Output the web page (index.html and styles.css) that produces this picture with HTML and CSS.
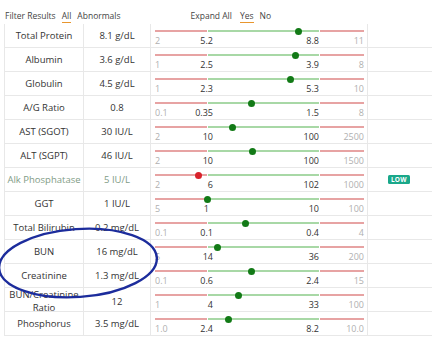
FILE: index.html
```html
<!DOCTYPE html>
<html>
<head>
<meta charset="utf-8">
<link rel="stylesheet" href="styles.css">
</head>
<body>
<div class="page">
  <div class="toolbar">
    <div class="group">
      <span class="lbl">Filter Results</span>
      <span class="opt active">All</span>
      <span class="opt">Abnormals</span>
    </div>
    <div class="group group-right">
      <span class="lbl">Expand All</span>
      <span class="opt active">Yes</span>
      <span class="opt">No</span>
    </div>
  </div>
  <div class="table">
    <div class="row">
      <div class="cell name">Total Protein</div>
      <div class="cell val">8.1 g/dL</div>
      <div class="cell range">
        <div class="bar"><span class="seg red s1"></span><span class="seg green s2"></span><span class="seg red s3"></span><span class="dot" style="left:139.5px"></span></div>
        <div class="labels"><span class="l1"><i>2</i><b>5.2</b></span><span class="l2"><b>8.8</b></span><span class="l3"><i>11</i></span></div>
      </div>
      <div class="cell flag"></div>
    </div>
    <div class="row">
      <div class="cell name">Albumin</div>
      <div class="cell val">3.6 g/dL</div>
      <div class="cell range">
        <div class="bar"><span class="seg red s1"></span><span class="seg green s2"></span><span class="seg red s3"></span><span class="dot" style="left:136.5px"></span></div>
        <div class="labels"><span class="l1"><i>1</i><b>2.5</b></span><span class="l2"><b>3.9</b></span><span class="l3"><i>8</i></span></div>
      </div>
      <div class="cell flag"></div>
    </div>
    <div class="row">
      <div class="cell name">Globulin</div>
      <div class="cell val">4.5 g/dL</div>
      <div class="cell range">
        <div class="bar"><span class="seg red s1"></span><span class="seg green s2"></span><span class="seg red s3"></span><span class="dot" style="left:131.5px"></span></div>
        <div class="labels"><span class="l1"><i>1</i><b>2.3</b></span><span class="l2"><b>5.3</b></span><span class="l3"><i>10</i></span></div>
      </div>
      <div class="cell flag"></div>
    </div>
    <div class="row">
      <div class="cell name">A/G Ratio</div>
      <div class="cell val">0.8</div>
      <div class="cell range">
        <div class="bar"><span class="seg red s1"></span><span class="seg green s2"></span><span class="seg red s3"></span><span class="dot" style="left:92.5px"></span></div>
        <div class="labels"><span class="l1"><i>0.1</i><b>0.35</b></span><span class="l2"><b>1.5</b></span><span class="l3"><i>8</i></span></div>
      </div>
      <div class="cell flag"></div>
    </div>
    <div class="row">
      <div class="cell name">AST (SGOT)</div>
      <div class="cell val">30 IU/L</div>
      <div class="cell range">
        <div class="bar"><span class="seg red s1"></span><span class="seg green s2"></span><span class="seg red s3"></span><span class="dot" style="left:73.5px"></span></div>
        <div class="labels"><span class="l1"><i>2</i><b>10</b></span><span class="l2"><b>100</b></span><span class="l3"><i>2500</i></span></div>
      </div>
      <div class="cell flag"></div>
    </div>
    <div class="row">
      <div class="cell name">ALT (SGPT)</div>
      <div class="cell val">46 IU/L</div>
      <div class="cell range">
        <div class="bar"><span class="seg red s1"></span><span class="seg green s2"></span><span class="seg red s3"></span><span class="dot" style="left:93.5px"></span></div>
        <div class="labels"><span class="l1"><i>2</i><b>10</b></span><span class="l2"><b>100</b></span><span class="l3"><i>1500</i></span></div>
      </div>
      <div class="cell flag"></div>
    </div>
    <div class="row abnormal">
      <div class="cell name">Alk Phosphatase</div>
      <div class="cell val">5 IU/L</div>
      <div class="cell range">
        <div class="bar"><span class="seg red s1"></span><span class="seg green s2"></span><span class="seg red s3"></span><span class="dot dot-red" style="left:39.5px"></span></div>
        <div class="labels"><span class="l1"><i>2</i><b>6</b></span><span class="l2"><b>102</b></span><span class="l3"><i>1000</i></span></div>
      </div>
      <div class="cell flag"><span class="badge">LOW</span></div>
    </div>
    <div class="row">
      <div class="cell name">GGT</div>
      <div class="cell val">1 IU/L</div>
      <div class="cell range">
        <div class="bar"><span class="seg red s1"></span><span class="seg green s2"></span><span class="seg red s3"></span><span class="dot" style="left:48.5px"></span></div>
        <div class="labels"><span class="l1"><i>5</i><b class="near">1</b></span><span class="l2"><b>10</b></span><span class="l3"><i>100</i></span></div>
      </div>
      <div class="cell flag"></div>
    </div>
    <div class="row">
      <div class="cell name">Total Bilirubin</div>
      <div class="cell val">0.2 mg/dL</div>
      <div class="cell range">
        <div class="bar"><span class="seg red s1"></span><span class="seg green s2"></span><span class="seg red s3"></span><span class="dot" style="left:86.5px"></span></div>
        <div class="labels"><span class="l1"><i>0.1</i><b>0.1</b></span><span class="l2"><b>0.4</b></span><span class="l3"><i>4</i></span></div>
      </div>
      <div class="cell flag"></div>
    </div>
    <div class="row">
      <div class="cell name">BUN</div>
      <div class="cell val">16 mg/dL</div>
      <div class="cell range">
        <div class="bar"><span class="seg red s1"></span><span class="seg green s2"></span><span class="seg red s3"></span><span class="dot" style="left:58.5px"></span></div>
        <div class="labels"><span class="l1"><i>5</i><b>14</b></span><span class="l2"><b>36</b></span><span class="l3"><i>200</i></span></div>
      </div>
      <div class="cell flag"></div>
    </div>
    <div class="row">
      <div class="cell name">Creatinine</div>
      <div class="cell val">1.3 mg/dL</div>
      <div class="cell range">
        <div class="bar"><span class="seg red s1"></span><span class="seg green s2"></span><span class="seg red s3"></span><span class="dot" style="left:92.5px"></span></div>
        <div class="labels"><span class="l1"><i>0.1</i><b>0.6</b></span><span class="l2"><b>2.4</b></span><span class="l3"><i>15</i></span></div>
      </div>
      <div class="cell flag"></div>
    </div>
    <div class="row">
      <div class="cell name two">BUN/Creatinine<br>Ratio</div>
      <div class="cell val">12</div>
      <div class="cell range">
        <div class="bar"><span class="seg red s1"></span><span class="seg green s2"></span><span class="seg red s3"></span><span class="dot" style="left:79.5px"></span></div>
        <div class="labels"><span class="l1"><i>1</i><b>4</b></span><span class="l2"><b>33</b></span><span class="l3"><i>100</i></span></div>
      </div>
      <div class="cell flag"></div>
    </div>
    <div class="row">
      <div class="cell name">Phosphorus</div>
      <div class="cell val">3.5 mg/dL</div>
      <div class="cell range">
        <div class="bar"><span class="seg red s1"></span><span class="seg green s2"></span><span class="seg red s3"></span><span class="dot" style="left:69.5px"></span></div>
        <div class="labels"><span class="l1"><i>1.0</i><b>2.4</b></span><span class="l2"><b>8.2</b></span><span class="l3"><i>10.0</i></span></div>
      </div>
      <div class="cell flag"></div>
    </div>
  </div>
  <svg class="annotation" width="432" height="339" viewBox="0 0 432 339">
    <ellipse cx="78" cy="263" rx="79" ry="34" transform="rotate(-4 78 263)" fill="none" stroke="#1c2c9c" stroke-width="2.4"/>
  </svg>
</div>
</body>
</html>
```

FILE: styles.css
```css
html, body {
  margin: 0;
  padding: 0;
  background: #ffffff;
}
.page {
  position: relative;
  width: 432px;
  height: 339px;
  overflow: hidden;
  font-family: "Open Sans", "Liberation Sans", sans-serif;
  color: #333333;
}
.toolbar {
  height: 24px;
  display: flex;
  align-items: flex-start;
  padding-left: 5px;
  font-size: 8.5px;
  color: #444444;
}
.group {
  display: flex;
  gap: 6px;
  padding-top: 10px;
}
.group-right {
  margin-left: 70px;
}
.group-right .opt.active {
  margin-left: 2px;
}
.opt {
  padding-bottom: 1px;
}
.opt.active {
  border-bottom: 1px solid #e8962e;
}
.table {
  margin-left: 4px;
}
.row {
  display: grid;
  grid-template-columns: 80px 67px 217px 1fr;
  height: 24px;
  box-sizing: border-box;
  border-bottom: 1px solid #e8e8e8;
}
.cell {
  box-sizing: border-box;
  border-right: 1px solid #e8e8e8;
}
.name {
  border-left: 1px solid #e8e8e8;
  display: flex;
  align-items: center;
  justify-content: center;
  text-align: center;
  font-size: 9.5px;
  line-height: 12px;
}
.name.two {
  line-height: 13px;
}
.val {
  display: flex;
  align-items: center;
  justify-content: center;
  font-size: 9.5px;
}
.abnormal .name,
.abnormal .val {
  color: #7f9c86;
}
.range {
  padding: 6px 3px 0 4px;
}
.bar {
  position: relative;
  display: flex;
  gap: 1px;
  height: 1.5px;
}
.seg {
  display: block;
  height: 1.5px;
}
.red {
  background: #e7a3a3;
}
.green {
  background: #a8d8a6;
}
.s1 { width: 52px; }
.s2 { width: 111px; }
.s3 { width: 44px; }
.dot {
  position: absolute;
  top: -2.5px;
  width: 7px;
  height: 7px;
  border-radius: 50%;
  background: #127a16;
}
.dot-red {
  background: #d8222b;
}
.labels {
  display: grid;
  grid-template-columns: 58px 106px 45px;
  margin-top: 3px;
  font-size: 9px;
  line-height: 12px;
}
.labels i {
  font-style: normal;
  color: #b0b0b0;
}
.labels b {
  font-weight: normal;
  color: #333333;
}
.l1 {
  display: flex;
  justify-content: space-between;
}
.l2, .l3 {
  text-align: right;
}
.near {
  margin-right: 4px;
}
.flag {
  border-right: none;
  display: flex;
  align-items: center;
  padding-left: 20px;
}
.badge {
  background: #1aa88a;
  color: #ffffff;
  font-size: 6.5px;
  font-weight: 700;
  line-height: 9px;
  padding: 0 3px;
  border-radius: 1.5px;
  letter-spacing: 0.2px;
}
.annotation {
  position: absolute;
  left: 0;
  top: 0;
  pointer-events: none;
}
```
